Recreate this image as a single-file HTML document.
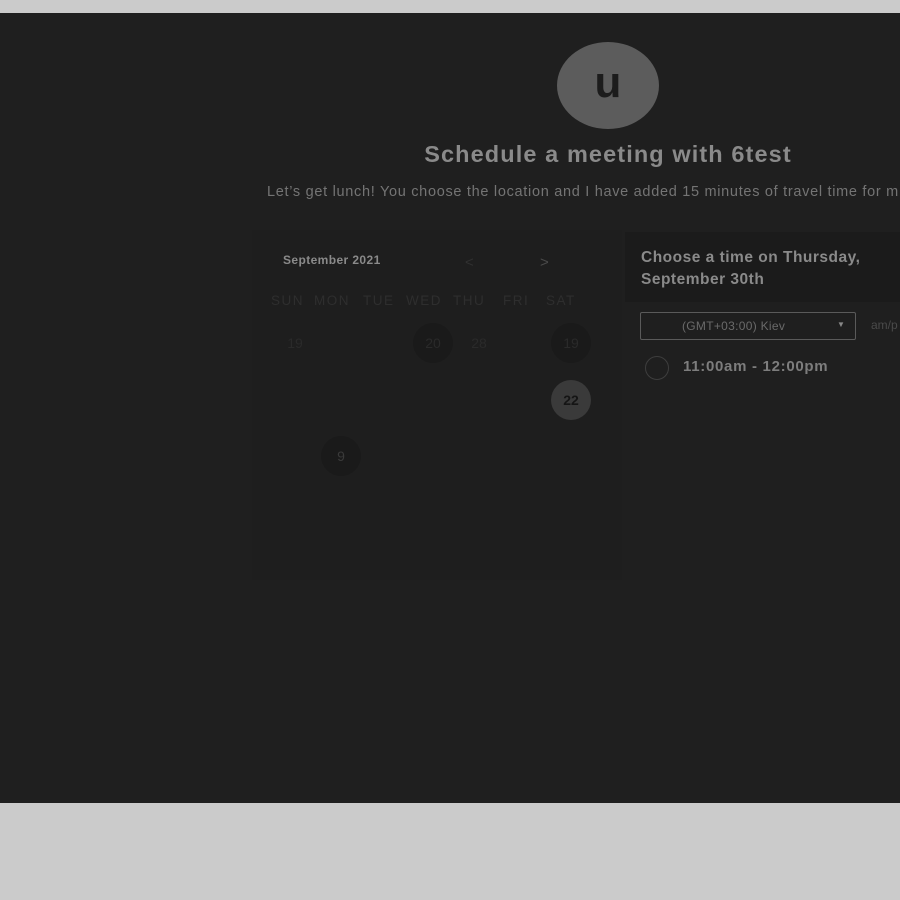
<!DOCTYPE html>
<html><head><style>
body{margin:0;width:900px;height:900px;background:#cbcbcb;position:relative;overflow:hidden;font-family:"Liberation Sans",sans-serif}
.main{position:absolute;left:0;top:13px;width:900px;height:790px;background:#1f1f1f}
.a{position:absolute}
.avatar{left:557px;top:42px;width:102px;height:87px;border-radius:50%;background:#5c5c5c;color:#1c1c1c;font-size:44px;font-weight:bold;text-align:center;line-height:82px}
.title{left:0;width:1216px;top:141px;text-align:center;color:#8a8a8a;font-size:23.5px;font-weight:bold;letter-spacing:1.1px}
.sub{left:267px;top:184px;color:#747474;font-size:14.5px;white-space:nowrap;letter-spacing:0.7px}
.d{color:#2e2e2e;font-size:13.5px;letter-spacing:1.5px}
.n{color:#2a2a2a;font-size:14px;text-align:center;width:40px;line-height:40px;border-radius:50%}
</style></head><body>
<div class="main"></div>
<div class="a avatar">u</div>
<div class="a title">Schedule a meeting with 6test</div>
<div class="a sub">Let’s get lunch! You choose the location and I have added 15 minutes of travel time for m</div>
<div class="a" style="left:252px;top:230px;width:370px;height:350px;background:#1e1e1e"></div>
<div class="a" style="left:283px;top:253px;color:#8a8a8a;font-size:12px;font-weight:bold;letter-spacing:0.4px">September 2021</div>
<div class="a" style="left:465px;top:254px;color:#303030;font-size:15px">&lt;</div>
<div class="a" style="left:540px;top:254px;color:#4a4a4a;font-size:15px">&gt;</div>
<div class="a d" style="left:271px;top:293px">SUN</div>
<div class="a d" style="left:314px;top:293px">MON</div>
<div class="a d" style="left:363px;top:293px">TUE</div>
<div class="a d" style="left:406px;top:293px">WED</div>
<div class="a d" style="left:453px;top:293px">THU</div>
<div class="a d" style="left:503px;top:293px">FRI</div>
<div class="a d" style="left:546px;top:293px">SAT</div>
<div class="a n" style="left:275px;top:323px">19</div>
<div class="a n" style="left:413px;top:323px;background:#1a1a1a">20</div>
<div class="a n" style="left:459px;top:323px">28</div>
<div class="a n" style="left:551px;top:323px;background:#1a1a1a">19</div>
<div class="a n" style="left:551px;top:380px;background:#3a3a3a;color:#151515;font-weight:bold">22</div>
<div class="a n" style="left:321px;top:436px;background:#1a1a1a;color:#3a3a3a">9</div>
<div class="a" style="left:625px;top:232px;width:275px;height:70px;background:#1b1b1b"></div>
<div class="a" style="left:641px;top:247px;color:#8a8a8a;font-size:15.5px;font-weight:bold;line-height:22px;letter-spacing:0.5px">Choose a time on Thursday,<br>September 30th</div>
<div class="a" style="left:640px;top:312px;width:214px;height:26px;border:1px solid #5a5a5a;border-radius:2px;color:#6a6a6a;font-size:12px;line-height:26px;letter-spacing:0.3px"><span style="position:absolute;left:41px">(GMT+03:00) Kiev</span><span style="position:absolute;left:196px;top:-1px;font-size:8px;color:#888">▼</span></div>
<div class="a" style="left:871px;top:318px;color:#4a4a4a;font-size:12px">am/p</div>
<div class="a" style="left:645px;top:356px;width:22px;height:22px;border:1px solid #3e3e3e;border-radius:50%"></div>
<div class="a" style="left:683px;top:358px;color:#7d7d7d;font-size:15px;font-weight:bold;letter-spacing:0.7px">11:00am - 12:00pm</div>
</body></html>
